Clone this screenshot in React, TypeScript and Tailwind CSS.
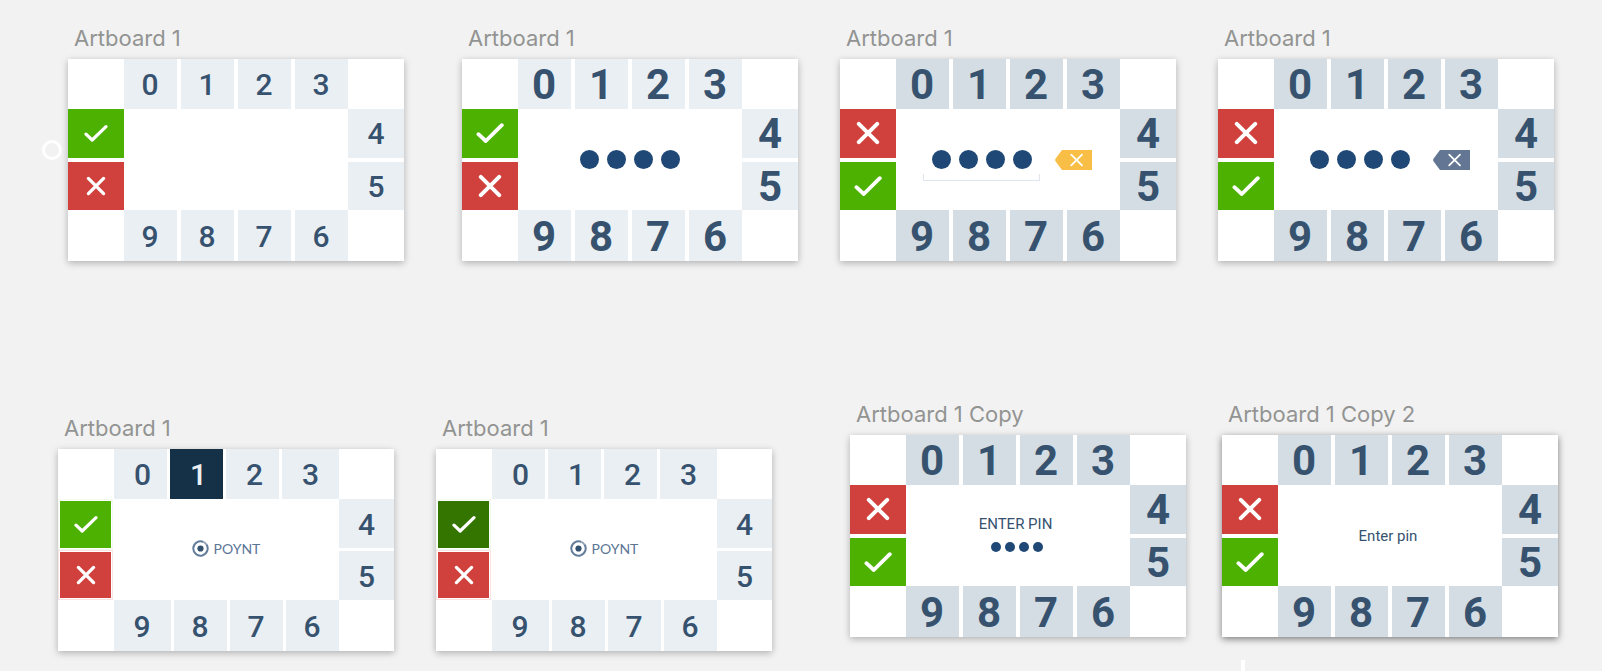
import type { ReactNode } from "react";

type Size = "small" | "large";
type Action = "confirm" | "cancel";

interface BoardProps {
  title: string;
  place: string;
  size: Size;
  tile: string;
  actions: Action[];
  shadow?: string;
  children?: ReactNode;
}

const LIGHT = "bg-[#eaeff3]";
const DARK = "bg-[#d3dde3]";
const SHADOW = "shadow-[0_2px_7px_rgba(0,0,0,0.28)]";

function CheckIcon({ size }: { size: Size }) {
  return size === "small" ? (
    <svg width="24" height="18" viewBox="0 0 24 18" fill="none" stroke="#fff" strokeWidth="3.2" strokeLinecap="round" strokeLinejoin="round" aria-hidden="true">
      <path d="M2 10.2 8.2 16 22 2.6" />
    </svg>
  ) : (
    <svg width="28" height="22" viewBox="0 0 28 22" fill="none" stroke="#fff" strokeWidth="3.8" strokeLinecap="round" strokeLinejoin="round" aria-hidden="true">
      <path d="M2.4 12.2 9.8 19 25.8 3.2" />
    </svg>
  );
}

function CrossIcon({ size }: { size: Size }) {
  return size === "small" ? (
    <svg width="20" height="20" viewBox="0 0 20 20" fill="none" stroke="#fff" strokeWidth="3.3" strokeLinecap="round" aria-hidden="true">
      <path d="M2.4 2.4 17.6 17.6M17.6 2.4 2.4 17.6" />
    </svg>
  ) : (
    <svg width="24" height="24" viewBox="0 0 24 24" fill="none" stroke="#fff" strokeWidth="4" strokeLinecap="round" aria-hidden="true">
      <path d="M2.8 2.8 21.2 21.2M21.2 2.8 2.8 21.2" />
    </svg>
  );
}

function Digit({ value, size, className }: { value: number; size: Size; className: string }) {
  const text = size === "small" ? "text-[30px] font-medium" : "text-[42px] font-bold";
  return (
    <button type="button" className={`flex items-center justify-center pt-[2px] leading-none ${text} ${className}`}>
      {value}
    </button>
  );
}

function ActionKey({ action, size, className }: { action: Action; size: Size; className: string }) {
  return (
    <button type="button" aria-label={action === "confirm" ? "Confirm" : "Cancel"} className={`flex items-center justify-center ${className}`}>
      {action === "confirm" ? <CheckIcon size={size} /> : <CrossIcon size={size} />}
    </button>
  );
}

function Artboard({ title, place, shadow = SHADOW, children }: { title: string; place: string; shadow?: string; children: ReactNode }) {
  return (
    <section className={`absolute ${place}`}>
      <h2 className="pb-[10px] pl-[6px] font-['Inter',sans-serif] text-[22px] leading-[22px] whitespace-nowrap text-[#929492]">{title}</h2>
      <div className={`flex w-[336px] flex-col bg-white ${shadow}`}>{children}</div>
    </section>
  );
}

function PinBoard({ title, place, size, tile, actions, shadow, children }: BoardProps) {
  const tone = `${tile} text-[#36526f]`;
  return (
    <Artboard title={title} place={place} shadow={shadow}>
      <div className="grid h-[50px] grid-cols-4 gap-1 px-14">
        {[0, 1, 2, 3].map((n) => (
          <Digit key={n} value={n} size={size} className={`pr-px ${tone}`} />
        ))}
      </div>
      <div className="flex h-[101px]">
        <div className="flex w-14 flex-col gap-1">
          {actions.map((a) => (
            <ActionKey key={a} action={a} size={size} className={`flex-1 ${a === "confirm" ? "bg-[#4cb100]" : "bg-[#d0403c]"}`} />
          ))}
        </div>
        <div className="flex flex-1 flex-col items-center justify-center">{children}</div>
        <div className="flex w-14 flex-col gap-1">
          {[4, 5].map((n) => (
            <Digit key={n} value={n} size={size} className={`flex-1 ${tone}`} />
          ))}
        </div>
      </div>
      <div className="grid h-[51px] grid-cols-4 gap-1 px-14">
        {[9, 8, 7, 6].map((n) => (
          <Digit key={n} value={n} size={size} className={`pr-px ${tone}`} />
        ))}
      </div>
    </Artboard>
  );
}

function PoyntLogo() {
  return (
    <div className="flex items-center gap-[5px] pb-[2px] text-[#5b7595]">
      <svg width="17" height="17" viewBox="0 0 17 17" fill="none" aria-hidden="true">
        <path d="M11.4 1.9A7.2 7.2 0 1 0 14.4 4.4" stroke="#637d9b" strokeWidth="2" />
        <path d="M11.4 1.9A7.2 7.2 0 0 1 14.4 4.4" stroke="#8ea2b8" strokeWidth="1.8" />
        <circle cx="8.5" cy="8.5" r="3.1" fill="#34506f" />
      </svg>
      <span className="font-['Lato',sans-serif] text-[14px] leading-4">POYNT</span>
    </div>
  );
}

function PressedBoard({ place, pressedDigit, confirmColor }: { place: string; pressedDigit?: number; confirmColor: string }) {
  const tone = `${LIGHT} text-[#36526f]`;
  return (
    <Artboard title="Artboard 1" place={place}>
      <div className="flex h-[50px] gap-[3px] pr-[55px] pl-14">
        {[0, 1, 2, 3].map((n) => (
          <Digit
            key={n}
            value={n}
            size="small"
            className={`${n === 3 ? "flex-1" : "w-[53px] pl-1"} ${n === pressedDigit ? "bg-[#143147] text-[#eaeff3]" : tone}`}
          />
        ))}
      </div>
      <div className="flex h-[101px]">
        <div className="flex w-[55px] flex-col">
          <div className="flex flex-1 border border-[#f2faee] p-px">
            <ActionKey action="confirm" size="small" className={`flex-1 ${confirmColor}`} />
          </div>
          <div className="flex flex-1 border border-[#fbe3e3] p-px">
            <ActionKey action="cancel" size="small" className="flex-1 bg-[#d0403c]" />
          </div>
        </div>
        <div className="flex flex-1 items-center justify-center">
          <PoyntLogo />
        </div>
        <div className="flex w-[55px] flex-col gap-[3px]">
          {[4, 5].map((n) => (
            <Digit key={n} value={n} size="small" className={`flex-1 ${tone}`} />
          ))}
        </div>
      </div>
      <div className="flex h-[51px] gap-[3px] pr-[55px] pl-14">
        {[9, 8, 7, 6].map((n) => (
          <Digit key={n} value={n} size="small" className={`pr-px ${n === 9 ? "flex-1" : "w-[53px]"} ${tone}`} />
        ))}
      </div>
    </Artboard>
  );
}

function Dots({ size }: { size: Size }) {
  return (
    <div className={`flex ${size === "small" ? "gap-1" : "gap-2"}`}>
      {[0, 1, 2, 3].map((n) => (
        <span key={n} className={`rounded-full bg-[#1f4877] ${size === "small" ? "size-[10px]" : "size-[19px]"}`} />
      ))}
    </div>
  );
}

function PinEntry({ bracket, fill }: { bracket: string; fill: string }) {
  return (
    <div className="flex items-center gap-[15px] pr-px">
      <div className="flex w-[117px] flex-col items-center gap-[5px] pt-3">
        <Dots size="large" />
        <div className={`h-[7px] w-full border border-t-0 ${bracket}`} />
      </div>
      <button type="button" aria-label="Delete">
        <svg width="37" height="20" viewBox="0 0 37 20" className="block" aria-hidden="true">
          <path d="M7 0H37V20H7L0.6 11.6Q-.4 10 .6 8.4Z" fill={fill} />
          <path d="M16.2 4.6 27 15.4M27 4.6 16.2 15.4" stroke="#fff" strokeWidth="1.8" strokeLinecap="round" />
        </svg>
      </button>
    </div>
  );
}

export default function App() {
  return (
    <main className="relative h-screen w-full overflow-hidden bg-[#f2f2f2] font-['Roboto',sans-serif]">
      <span className="absolute top-[140px] left-[42px] size-5 rounded-full border-3 border-white" />

      <PinBoard title="Artboard 1" place="left-[68px] top-[27px]" size="small" tile={LIGHT} actions={["confirm", "cancel"]} />
      <PinBoard title="Artboard 1" place="left-[462px] top-[27px]" size="large" tile={LIGHT} actions={["confirm", "cancel"]}>
        <Dots size="large" />
      </PinBoard>
      <PinBoard title="Artboard 1" place="left-[840px] top-[27px]" size="large" tile={DARK} actions={["cancel", "confirm"]}>
        <PinEntry bracket="border-[#dfe6ee]" fill="#f8be45" />
      </PinBoard>
      <PinBoard title="Artboard 1" place="left-[1218px] top-[27px]" size="large" tile={DARK} actions={["cancel", "confirm"]}>
        <PinEntry bracket="border-transparent" fill="#637795" />
      </PinBoard>

      <PressedBoard place="left-[58px] top-[417px]" pressedDigit={1} confirmColor="bg-[#4cb100]" />
      <PressedBoard place="left-[436px] top-[417px]" confirmColor="bg-[#347500]" />
      <PinBoard title="Artboard 1 Copy" place="left-[850px] top-[403px]" size="large" tile={DARK} actions={["cancel", "confirm"]}>
        <div className="flex flex-col items-center gap-2 pr-px pb-[6px]">
          <p className="pr-1 text-[15px] leading-5 text-[#36526f]">ENTER PIN</p>
          <Dots size="small" />
        </div>
      </PinBoard>
      <PinBoard
        title="Artboard 1 Copy 2"
        place="left-[1222px] top-[403px]"
        size="large"
        tile={DARK}
        actions={["cancel", "confirm"]}
        shadow="shadow-[0_2px_7px_rgba(0,0,0,0.5)]"
      >
        <p className="pr-1 text-[15px] leading-5 text-[#36526f]">Enter pin</p>
      </PinBoard>

      <span className="absolute bottom-0 left-[1241px] h-[11px] w-1 bg-white" />
    </main>
  );
}
